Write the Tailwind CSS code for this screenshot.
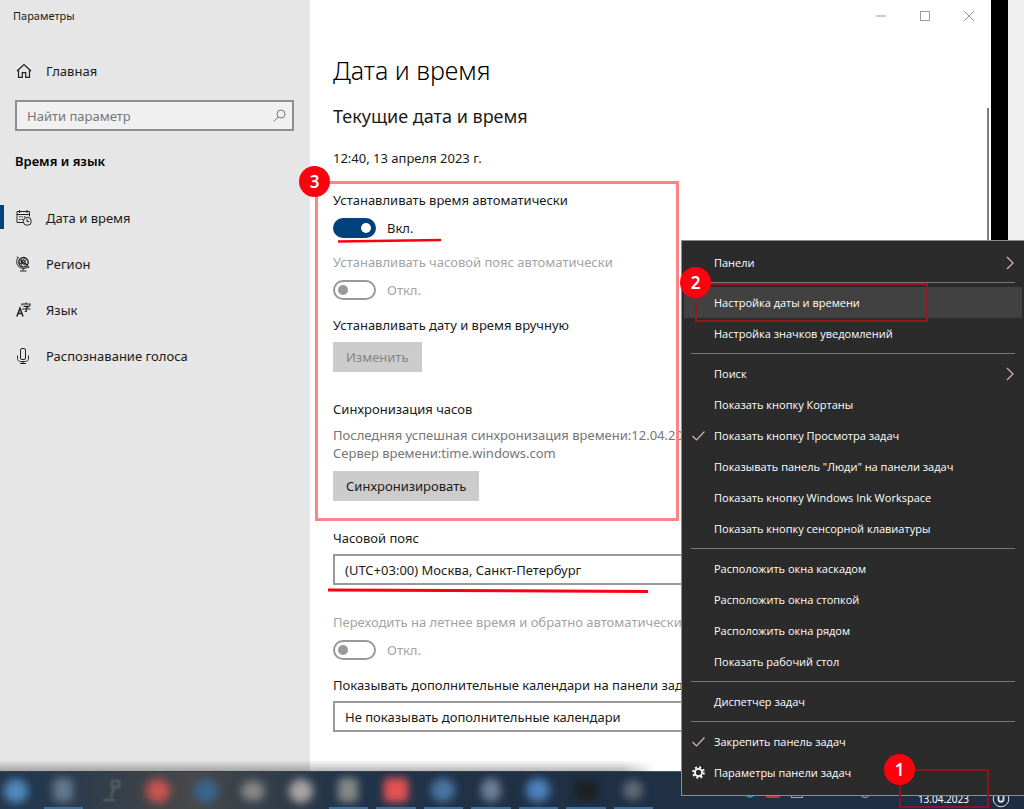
<!DOCTYPE html>
<html lang="ru">
<head>
<meta charset="utf-8">
<meta name="viewport" content="width=device-width, initial-scale=1">
<title>Параметры</title>
<script src="https://cdn.jsdelivr.net/npm/@tailwindcss/browser@4"></script>
</head>
<body class="relative flex min-h-screen flex-col overflow-hidden bg-white font-['Noto_Sans','Open_Sans',sans-serif] text-[13px] leading-5 text-[#1a1a1a]">

<div class="flex grow">
  <!-- Navigation -->
  <aside class="w-[310px] shrink-0 bg-[#e6e6e6]">
    <div class="px-[13px] pt-[6px] text-[11px]">Параметры</div>
    <a href="#" class="mt-[39px] flex h-3 items-center gap-[14px] pl-4">
      <svg class="size-4" viewBox="0 0 16 16" fill="none" stroke="#222" stroke-width="1.2"><path d="M1 8 8 1.5 15 8M2.5 7v7.4h3.8V9.6h3.4v4.8h3.8V7"/></svg>
      Главная
    </a>
    <label class="mx-[15px] mt-[23px] mr-4 flex h-[31px] items-center border-2 border-[#8f8f8f] bg-[#f0f0f0] pr-[6px] pl-[10px]">
      <input type="text" placeholder="Найти параметр" aria-label="Найти параметр" class="min-w-0 grow bg-transparent outline-none placeholder:text-[#767676]">
      <svg class="size-[13px]" viewBox="0 0 13 13" fill="none" stroke="#777"><circle cx="8" cy="5" r="4"/><path d="M5 8 .8 12.4"/></svg>
    </label>
    <h2 class="mt-5 pl-[15px] text-[13px] font-semibold text-black">Время и язык</h2>
    <nav class="mt-6">
      <a href="#" class="relative flex h-[46px] items-center gap-[14px] pl-4">
        <span class="absolute top-[10px] left-0 h-6 w-1 bg-[#00407b]"></span>
        <svg class="size-4" viewBox="0 0 16 16" fill="none" stroke="#222"><path d="M7 12.5H1v-11h12.5v5M1 4.5h12.5M3.5 0v3M11 0v3"/><path d="M3 6.8h7M3 9.5h4" stroke-dasharray="1.5 1"/><circle cx="11.3" cy="11.3" r="4"/><path d="M11 8.8v2.8h2.2"/></svg>
        Дата и время
      </a>
      <a href="#" class="flex h-[46px] items-center gap-[14px] pl-4">
        <svg class="size-4" viewBox="0 0 16 16" fill="none" stroke="#222"><circle cx="7.5" cy="6.2" r="4.7" stroke-width="1.400"/><circle cx="7.500" cy="6.200" r="1.800"/><path d="M2.2 1.2C-.5 5 .5 10 4.500 11.8c3.300 1.300 6.500.5 8.500-1.500M3.500 4.200l8 4.500M5 2.500c1 5 3 7 6 6.200M3 7c3 1 6-1 7.500-4M5 10.500C4.500 7 7 3 9 2M1 .5l2 2M11 9l2 3M7 12.500v2.200M4 15h6.500"/></svg>
        Регион
      </a>
      <a href="#" class="flex h-[46px] items-center gap-[14px] pl-4">
        <svg class="size-4" viewBox="0 0 16 16" fill="none" stroke="#222"><path d="M.8 14.500 4 6.200l3 8.300M2 11.500h4" stroke-width="1.500"/><path d="M6 3.500V2h8v1.500M10 .5V2M7.500 4.300H13L10.300 6v3.500H8.800M6 7h8.500" stroke-width="1.200"/></svg>
        Язык
      </a>
      <a href="#" class="flex h-[46px] items-center gap-[14px] pl-4">
        <svg class="size-4" viewBox="0 0 16 16" fill="none" stroke="#222"><rect x="4.500" y=".5" width="5" height="11" rx="1.500"/><path d="M1.500 7.500v3c0 2 1.500 3 3 3h5c1.500 0 3-1 3-3v-3M7 13.500v2M4 15.500h6"/></svg>
        Распознавание голоса
      </a>
    </nav>
  </aside>

  <!-- Date and time settings -->
  <main class="relative min-w-0 grow pb-[39px] pl-[23px]">
    <div class="absolute top-0 right-0 flex h-8 items-center gap-8 pr-4 text-[#999]">
      <button aria-label="Свернуть"><svg class="size-3" viewBox="0 0 12 12" stroke="currentColor"><path d="M1 6h10"/></svg></button>
      <button aria-label="Развернуть"><svg class="size-3" viewBox="0 0 12 12" fill="none" stroke="currentColor"><path d="M1.500 1.500h9v9h-9z"/></svg></button>
      <button aria-label="Закрыть"><svg class="size-3" viewBox="0 0 12 12" stroke="currentColor"><path d="m1 1 10 10M11 1 1 11"/></svg></button>
    </div>
    <div class="absolute top-[108px] right-[2px] bottom-0 w-[2px] bg-[#7d7f82]"></div>

    <div class="w-[570px] max-w-full whitespace-nowrap">
      <h1 class="pt-[50px] text-[25px] leading-10 font-light text-black">Дата и время</h1>
      <h2 class="mt-3 text-[18px] leading-7">Текущие дата и время</h2>
      <p class="mt-[18px]">12:40, 13 апреля 2023 г.</p>

      <label for="auto-time" class="mt-[22px] block">Устанавливать время автоматически</label>
      <div class="mt-2 flex h-5 items-center gap-[11px]">
        <input id="auto-time" type="checkbox" checked class="flex h-5 w-[43px] appearance-none items-center justify-end rounded-full bg-[#00407b] pr-[5px] before:size-[10px] before:rounded-full before:bg-white">
        <span>Вкл.</span>
      </div>

      <label for="auto-zone" class="mt-[14px] block text-[#a3a3a3]">Устанавливать часовой пояс автоматически</label>
      <div class="mt-2 flex h-5 items-center gap-[11px] text-[#a3a3a3]">
        <input id="auto-zone" type="checkbox" disabled class="flex h-5 w-[43px] appearance-none items-center rounded-full border-2 border-[#999] pl-[3px] before:size-[10px] before:rounded-full before:bg-[#999]">
        <span>Откл.</span>
      </div>

      <p class="mt-[15px]">Устанавливать дату и время вручную</p>
      <button disabled class="mt-[7px] block h-[30px] bg-[#cccccc] px-[13px] text-[#858585]">Изменить</button>

      <h3 class="mt-[27px]">Синхронизация часов</h3>
      <p class="mt-[7px] leading-[18px] text-[#767676]">Последняя успешная синхронизация времени:12.04.2023<br>Сервер времени:time.windows.com</p>
      <button class="mt-[9px] block h-[30px] bg-[#cccccc] px-[13px]">Синхронизировать</button>

      <label for="zone" class="mt-[27px] block">Часовой пояс</label>
      <select id="zone" class="mt-[6px] block h-[31px] w-full appearance-none border-2 border-[#999] bg-white px-[10px]"><option>(UTC+03:00) Москва, Санкт-Петербург</option></select>

      <label for="dst" class="mt-[27px] block text-[#a3a3a3]">Переходить на летнее время и обратно автоматически</label>
      <div class="mt-2 flex h-5 items-center gap-[11px] text-[#a3a3a3]">
        <input id="dst" type="checkbox" disabled class="flex h-5 w-[43px] appearance-none items-center rounded-full border-2 border-[#999] pl-[3px] before:size-[10px] before:rounded-full before:bg-[#999]">
        <span>Откл.</span>
      </div>

      <label for="calendars" class="mt-[15px] block">Показывать дополнительные календари на панели задач</label>
      <select id="calendars" class="mt-[6px] block h-[31px] w-full appearance-none border-2 border-[#999] bg-white px-[10px]"><option>Не показывать дополнительные календари</option></select>
    </div>
  </main>

  <div class="w-[17px] shrink-0 bg-black"></div>
  <div class="w-4 shrink-0 bg-[#efefef]"></div>
</div>

<!-- Taskbar -->
<footer class="relative z-10 flex h-[38px] shrink-0 justify-between border-t border-[#4a5967] bg-[#20304a] bg-linear-to-r from-[#24384e] via-[#203146] to-[#1e2d42]">
  <div class="absolute bottom-full left-0 h-3 w-[655px] bg-linear-to-t from-black/30 to-transparent mask-r-from-95%"></div>
  <div class="absolute inset-y-0 left-10 w-[300px] bg-linear-to-r from-transparent via-[#484848] to-transparent"></div>
  <div class="relative -ml-2 grid w-[665px] grid-cols-14 overflow-hidden">
    <div class="mx-1 flex items-center justify-center"><span class="size-6 rounded-full bg-[#5189bd] blur-xs"></span></div>
    <div class="mx-1 flex items-center justify-center border-b-2 border-[#44719a]"><span class="h-6 w-5 rounded-md bg-[#64788f] blur-xs"></span></div>
    <div class="mx-1 flex items-center justify-center"><svg class="h-6 w-5 blur-[1px]" viewBox="0 0 20 24" fill="none" stroke="#5c656e" stroke-width="2"><path d="M11 2h7v6h-7zM2 21h12M13 9l-3 9"/></svg></div>
    <div class="mx-1 flex items-center justify-center"><span class="size-6 rounded-full bg-[#c85450] blur-xs"></span></div>
    <div class="mx-1 flex items-center justify-center"><span class="size-6 rounded-full bg-[#39658f] blur-xs"></span></div>
    <div class="mx-1 flex items-center justify-center"><span class="h-5 w-6 rounded-full bg-[#868686] blur-xs"></span></div>
    <div class="mx-1 flex items-center justify-center"><span class="size-6 rounded-full bg-[#a8a3a1] blur-xs"></span></div>
    <div class="mx-1 flex items-center justify-center border-b-2 border-[#44719a]"><span class="h-6 w-5 rounded-sm bg-[#858987] blur-xs"></span></div>
    <div class="mx-1 flex items-center justify-center border-b-2 border-[#44719a]"><span class="size-6 rounded-sm bg-[#e65353] blur-xs"></span></div>
    <div class="mx-1 flex items-center justify-center border-b-2 border-[#44719a]"><span class="size-6 rounded-full bg-[#4a75a0] blur-xs"></span></div>
    <div class="mx-1 flex items-center justify-center border-b-2 border-[#44719a]"><span class="h-6 w-5 rounded-full bg-[#6b7f98] blur-xs"></span></div>
    <div class="mx-1 flex items-center justify-center border-b-2 border-[#44719a]"><span class="size-6 rounded-full bg-[#4b82ba] blur-xs"></span></div>
    <div class="mx-1 flex items-center justify-center border-b-2 border-[#44719a]"><span class="h-5 w-6 bg-[#1d2024] blur-xs"></span></div>
    <div class="mx-1 flex items-center justify-center border-b-2 border-[#44719a]"><span class="size-5 rounded-full bg-[#626c76] blur-xs"></span></div>
  </div>
  <div class="flex items-end pr-[14px] pb-[1px] text-[10px] leading-[18px] text-white">
    <span class="mb-[10px] size-[10px] rounded-full bg-[#2f7fd0]"></span>
    <span class="mb-[10px] ml-[10px] h-3 w-4 rounded-sm bg-[#c5343c]"></span>
    <span class="mb-[10px] ml-[10px] h-3 w-3 border-x border-b border-white/60"></span>
    <span class="mb-[10px] ml-14 size-3 rounded-full border border-white/60"></span>
    <time class="ml-[47px]">13.04.2023</time>
    <svg class="ml-[23px] size-[18px]" viewBox="0 0 18 18" fill="none" stroke="#dde1e5"><circle cx="9" cy="9" r="7.800"/><path d="M6.500 6v3.500c0 3 5 3 5 0V6" stroke-width="1.800"/></svg>
  </div>
</footer>

<!-- Taskbar context menu -->
<div role="menu" class="absolute top-[240px] right-0 z-20 flex w-[343px] flex-col border-y border-l border-[#8d8f8f] bg-[#2b2b2b] pt-[6px] pb-[7px] font-['Open_Sans','Noto_Sans',sans-serif] text-[11px] font-medium text-white">
  <button role="menuitem" class="flex h-[31px] items-center justify-between pr-[10px] pl-8">Панели<svg class="h-[14px] w-2" viewBox="0 0 8 14" fill="none" stroke="#d9b5b5" stroke-width="1.200"><path d="m1 1 6 6-6 6"/></svg></button>
  <hr class="my-1 mr-[9px] ml-[9px] border-[#777]">
  <button role="menuitem" class="mr-[2px] ml-[2px] flex h-[31px] items-center bg-[#414141] pl-[30px]">Настройка даты и времени</button>
  <button role="menuitem" class="flex h-[31px] items-center pl-8">Настройка значков уведомлений</button>
  <hr class="my-1 mr-[9px] ml-[9px] border-[#777]">
  <button role="menuitem" class="flex h-[31px] items-center justify-between pr-[10px] pl-8">Поиск<svg class="h-[14px] w-2" viewBox="0 0 8 14" fill="none" stroke="#d9b5b5" stroke-width="1.200"><path d="m1 1 6 6-6 6"/></svg></button>
  <button role="menuitem" class="flex h-[31px] items-center pl-8">Показать кнопку Кортаны</button>
  <button role="menuitem" class="flex h-[31px] items-center gap-[9px] pl-[10px]"><svg class="h-[10px] w-[13px]" viewBox="0 0 13 10" fill="none" stroke="#d9b5b5" stroke-width="1.200"><path d="m.5 5 4 4 8-8.500"/></svg>Показать кнопку Просмотра задач</button>
  <button role="menuitem" class="flex h-[31px] items-center pl-8">Показывать панель "Люди" на панели задач</button>
  <button role="menuitem" class="flex h-[31px] items-center pl-8">Показать кнопку Windows Ink Workspace</button>
  <button role="menuitem" class="flex h-[31px] items-center pl-8">Показать кнопку сенсорной клавиатуры</button>
  <hr class="my-1 mr-[9px] ml-[9px] border-[#777]">
  <button role="menuitem" class="flex h-[31px] items-center pl-8">Расположить окна каскадом</button>
  <button role="menuitem" class="flex h-[31px] items-center pl-8">Расположить окна стопкой</button>
  <button role="menuitem" class="flex h-[31px] items-center pl-8">Расположить окна рядом</button>
  <button role="menuitem" class="flex h-[31px] items-center pl-8">Показать рабочий стол</button>
  <hr class="my-1 mr-[9px] ml-[9px] border-[#777]">
  <button role="menuitem" class="flex h-[31px] items-center pl-8">Диспетчер задач</button>
  <hr class="my-1 mr-[9px] ml-[9px] border-[#777]">
  <button role="menuitem" class="flex h-[31px] items-center gap-[9px] pl-[10px]"><svg class="h-[10px] w-[13px]" viewBox="0 0 13 10" fill="none" stroke="#d9b5b5" stroke-width="1.200"><path d="m.5 5 4 4 8-8.500"/></svg>Закрепить панель задач</button>
  <button role="menuitem" class="flex h-[31px] items-center gap-[9px] pl-[10px]"><svg class="size-[13px]" viewBox="0 0 13 13" fill="none" stroke="#fff"><circle cx="6.500" cy="6.500" r="3.600" stroke-width="1.800"/><circle cx="6.500" cy="6.500" r="5.300" stroke-width="2" stroke-dasharray="2 2.163"/></svg>Параметры панели задач</button>
</div>

<!-- Step annotations -->
<div class="pointer-events-none absolute top-[181px] left-[315px] z-10 h-[340px] w-[364px] border-3 border-[#ff8488]"></div>
<div class="pointer-events-none absolute top-[283px] right-[96px] z-30 h-[39px] w-[233px] border-2 border-[#941a20]"></div>
<div class="pointer-events-none absolute top-[769px] right-[35px] z-30 h-[39px] w-[90px] border-2 border-[#8c161f]"></div>
<svg class="pointer-events-none absolute top-[238px] left-[337px] h-[5px] w-[105px]" viewBox="0 0 105 5" stroke="#fb0012" stroke-width="2.500"><path d="M1 3.500 104 2"/></svg>
<svg class="pointer-events-none absolute top-[588px] left-[328px] h-[5px] w-[321px]" viewBox="0 0 321 5" stroke="#fb0012" stroke-width="3"><path d="M0 2 320 3.500"/></svg>
<span class="absolute top-[166px] left-[299px] z-30 flex size-[31px] items-center justify-center rounded-full bg-[#ff000e] text-[17px] font-semibold text-white">3</span>
<span class="absolute top-[267px] right-[313px] z-30 flex size-[31px] items-center justify-center rounded-full bg-[#ff000e] text-[17px] font-semibold text-white">2</span>
<span class="absolute top-[754px] right-[109px] z-30 flex size-[31px] items-center justify-center rounded-full bg-[#ff000e] text-[17px] font-semibold text-white">1</span>
</body>
</html>
